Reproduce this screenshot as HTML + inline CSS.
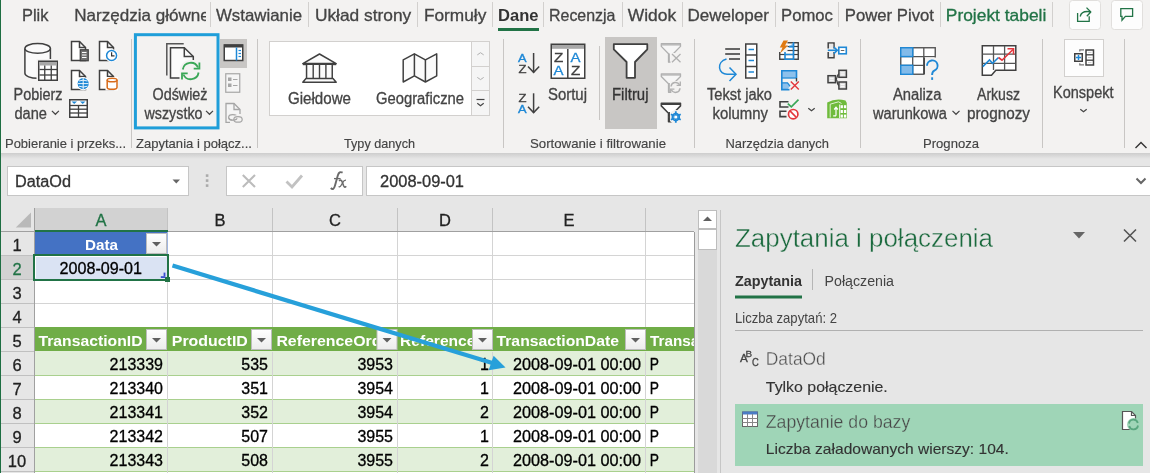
<!DOCTYPE html>
<html><head><meta charset="utf-8"><style>
html,body{margin:0;padding:0;background:#e6e6e6;overflow:hidden}
svg{display:block;font-family:"Liberation Sans", sans-serif;will-change:transform}
</style></head><body>
<svg width="1150" height="473" viewBox="0 0 1150 473">
<rect x="0" y="0" width="1150" height="473" fill="#e6e6e6" />
<rect x="0" y="0" width="1150" height="153" fill="#f3f2f1" />
<defs><linearGradient id="sh" x1="0" y1="0" x2="0" y2="1"><stop offset="0" stop-color="#cdcdcd"/><stop offset="1" stop-color="#e6e6e6"/></linearGradient></defs>
<rect x="0" y="153" width="1150" height="6" fill="url(#sh)" />
<text x="22.0" y="21" font-size="16.5" fill="#444444" textLength="26.5" lengthAdjust="spacingAndGlyphs" stroke="#444444" stroke-width="0.3" >Plik</text>
<text x="216.0" y="21" font-size="16.5" fill="#444444" textLength="86.0" lengthAdjust="spacingAndGlyphs" stroke="#444444" stroke-width="0.3" >Wstawianie</text>
<text x="314.9" y="21" font-size="16.5" fill="#444444" textLength="96.4" lengthAdjust="spacingAndGlyphs" stroke="#444444" stroke-width="0.3" >Układ strony</text>
<text x="423.9" y="21" font-size="16.5" fill="#444444" textLength="62.4" lengthAdjust="spacingAndGlyphs" stroke="#444444" stroke-width="0.3" >Formuły</text>
<text x="549.0" y="21" font-size="16.5" fill="#444444" textLength="66.5" lengthAdjust="spacingAndGlyphs" stroke="#444444" stroke-width="0.3" >Recenzja</text>
<text x="627.7" y="21" font-size="16.5" fill="#444444" textLength="48.5" lengthAdjust="spacingAndGlyphs" stroke="#444444" stroke-width="0.3" >Widok</text>
<text x="687.5" y="21" font-size="16.5" fill="#444444" textLength="81.4" lengthAdjust="spacingAndGlyphs" stroke="#444444" stroke-width="0.3" >Deweloper</text>
<text x="781.1" y="21" font-size="16.5" fill="#444444" textLength="51.8" lengthAdjust="spacingAndGlyphs" stroke="#444444" stroke-width="0.3" >Pomoc</text>
<text x="844.8" y="21" font-size="16.5" fill="#444444" textLength="89.2" lengthAdjust="spacingAndGlyphs" stroke="#444444" stroke-width="0.3" >Power Pivot</text>
<clipPath id="c1"><rect x="60" y="0" width="146" height="30"/></clipPath>
<text x="74.2" y="21" font-size="16.5" fill="#444444" textLength="135.5" lengthAdjust="spacingAndGlyphs" stroke="#444444" stroke-width="0.3" clip-path="url(#c1)">Narzędzia główne</text>
<text x="498" y="21" font-size="16.5" fill="#333" font-weight="bold" textLength="40.5" lengthAdjust="spacingAndGlyphs" >Dane</text>
<rect x="498" y="28" width="41" height="3" fill="#217346" />
<text x="945.8" y="21" font-size="16.5" fill="#217346" textLength="100.5" lengthAdjust="spacingAndGlyphs" stroke="#217346" stroke-width="0.3" >Projekt tabeli</text>
<line x1="210.5" y1="2" x2="210.5" y2="27" stroke="#d2d0ce" stroke-width="1" />
<line x1="308.5" y1="2" x2="308.5" y2="27" stroke="#d2d0ce" stroke-width="1" />
<line x1="417.5" y1="2" x2="417.5" y2="27" stroke="#d2d0ce" stroke-width="1" />
<line x1="492.5" y1="2" x2="492.5" y2="27" stroke="#d2d0ce" stroke-width="1" />
<line x1="543.5" y1="2" x2="543.5" y2="27" stroke="#d2d0ce" stroke-width="1" />
<line x1="622.5" y1="2" x2="622.5" y2="27" stroke="#d2d0ce" stroke-width="1" />
<line x1="682.5" y1="2" x2="682.5" y2="27" stroke="#d2d0ce" stroke-width="1" />
<line x1="775.5" y1="2" x2="775.5" y2="27" stroke="#d2d0ce" stroke-width="1" />
<line x1="838.5" y1="2" x2="838.5" y2="27" stroke="#d2d0ce" stroke-width="1" />
<line x1="940.5" y1="2" x2="940.5" y2="27" stroke="#d2d0ce" stroke-width="1" />
<line x1="1052.5" y1="2" x2="1052.5" y2="27" stroke="#d2d0ce" stroke-width="1" />
<rect x="1069.5" y="0.5" width="31" height="29" fill="#fdfdfd" stroke="#e1dfdd" stroke-width="1" rx="3"/>
<rect x="1111.5" y="0.5" width="31" height="29" fill="#fdfdfd" stroke="#e1dfdd" stroke-width="1" rx="3"/>
<line x1="131.5" y1="39" x2="131.5" y2="148" stroke="#c8c6c4" stroke-width="1" />
<line x1="257.5" y1="39" x2="257.5" y2="148" stroke="#c8c6c4" stroke-width="1" />
<line x1="503.5" y1="39" x2="503.5" y2="148" stroke="#c8c6c4" stroke-width="1" />
<line x1="694.5" y1="39" x2="694.5" y2="148" stroke="#c8c6c4" stroke-width="1" />
<line x1="860.5" y1="39" x2="860.5" y2="148" stroke="#c8c6c4" stroke-width="1" />
<line x1="1042.5" y1="39" x2="1042.5" y2="148" stroke="#c8c6c4" stroke-width="1" />
<line x1="1124.5" y1="39" x2="1124.5" y2="148" stroke="#c8c6c4" stroke-width="1" />
<text x="5" y="147.5" font-size="13" fill="#444444" textLength="121" lengthAdjust="spacingAndGlyphs" stroke="#444" stroke-width="0.15">Pobieranie i przeks...</text>
<text x="136" y="147.5" font-size="13" fill="#444444" textLength="116" lengthAdjust="spacingAndGlyphs" stroke="#444" stroke-width="0.15">Zapytania i połącz...</text>
<text x="344" y="147.5" font-size="13" fill="#444444" textLength="71" lengthAdjust="spacingAndGlyphs" stroke="#444" stroke-width="0.15">Typy danych</text>
<text x="530" y="147.5" font-size="13" fill="#444444" textLength="136" lengthAdjust="spacingAndGlyphs" stroke="#444" stroke-width="0.15">Sortowanie i filtrowanie</text>
<text x="725.5" y="147.5" font-size="13" fill="#444444" textLength="103.5" lengthAdjust="spacingAndGlyphs" stroke="#444" stroke-width="0.15">Narzędzia danych</text>
<text x="923" y="147.5" font-size="13" fill="#444444" textLength="56" lengthAdjust="spacingAndGlyphs" stroke="#444" stroke-width="0.15">Prognoza</text>
<text x="13.5" y="99.5" font-size="15.6" fill="#444444" textLength="49" lengthAdjust="spacingAndGlyphs" stroke="#444444" stroke-width="0.3" >Pobierz</text>
<text x="14.5" y="118.5" font-size="15.6" fill="#444444" textLength="32.5" lengthAdjust="spacingAndGlyphs" stroke="#444444" stroke-width="0.3" >dane</text>
<text x="152.5" y="99.5" font-size="15.6" fill="#444444" textLength="55" lengthAdjust="spacingAndGlyphs" stroke="#444444" stroke-width="0.3" >Odśwież</text>
<text x="144.5" y="118.5" font-size="15.6" fill="#444444" textLength="58" lengthAdjust="spacingAndGlyphs" stroke="#444444" stroke-width="0.3" >wszystko</text>
<text x="548" y="99.5" font-size="15.6" fill="#444444" textLength="39" lengthAdjust="spacingAndGlyphs" stroke="#444444" stroke-width="0.3" >Sortuj</text>
<text x="707" y="99.5" font-size="15.6" fill="#444444" textLength="65" lengthAdjust="spacingAndGlyphs" stroke="#444444" stroke-width="0.3" >Tekst jako</text>
<text x="712.5" y="118.5" font-size="15.6" fill="#444444" textLength="55.5" lengthAdjust="spacingAndGlyphs" stroke="#444444" stroke-width="0.3" >kolumny</text>
<text x="893" y="99.5" font-size="15.6" fill="#444444" textLength="48.5" lengthAdjust="spacingAndGlyphs" stroke="#444444" stroke-width="0.3" >Analiza</text>
<text x="873" y="118.5" font-size="15.6" fill="#444444" textLength="74" lengthAdjust="spacingAndGlyphs" stroke="#444444" stroke-width="0.3" >warunkowa</text>
<text x="977" y="99.5" font-size="15.6" fill="#444444" textLength="43" lengthAdjust="spacingAndGlyphs" stroke="#444444" stroke-width="0.3" >Arkusz</text>
<text x="967" y="118.5" font-size="15.6" fill="#444444" textLength="63" lengthAdjust="spacingAndGlyphs" stroke="#444444" stroke-width="0.3" >prognozy</text>
<text x="1053" y="97.5" font-size="15.6" fill="#444444" textLength="60.5" lengthAdjust="spacingAndGlyphs" stroke="#444444" stroke-width="0.3" >Konspekt</text>
<rect x="7.5" y="166.5" width="181" height="29" fill="#ffffff" stroke="#c6c6c6" stroke-width="1" />
<text x="15" y="187" font-size="16" fill="#333" textLength="56" lengthAdjust="spacingAndGlyphs" stroke="#333" stroke-width="0.3" >DataOd</text>
<rect x="226.5" y="166.5" width="136" height="29" fill="#ffffff" stroke="#c6c6c6" stroke-width="1" />
<rect x="366.5" y="166.5" width="790" height="29" fill="#ffffff" stroke="#c6c6c6" stroke-width="1" />
<text x="380" y="187" font-size="16" fill="#333" textLength="84" lengthAdjust="spacingAndGlyphs" stroke="#333" stroke-width="0.3" >2008-09-01</text>
<rect x="35" y="232" width="659" height="241" fill="#ffffff" />
<rect x="0" y="208" width="694" height="23" fill="#e6e6e6" />
<rect x="35" y="208" width="133" height="23" fill="#d2d2d2" />
<path d="M 31 227.6 L 31 212.4 L 15.8 227.6 Z" fill="#b9b9b9" />
<text x="101.0" y="226" font-size="16.5" fill="#217346" text-anchor="middle" stroke="#217346" stroke-width="0.3" >A</text>
<text x="220.0" y="226" font-size="16.5" fill="#222" text-anchor="middle" stroke="#222" stroke-width="0.3" >B</text>
<text x="335.0" y="226" font-size="16.5" fill="#222" text-anchor="middle" stroke="#222" stroke-width="0.3" >C</text>
<text x="445.0" y="226" font-size="16.5" fill="#222" text-anchor="middle" stroke="#222" stroke-width="0.3" >D</text>
<text x="569.0" y="226" font-size="16.5" fill="#222" text-anchor="middle" stroke="#222" stroke-width="0.3" >E</text>
<line x1="167.5" y1="208" x2="167.5" y2="231" stroke="#c3c3c3" stroke-width="1" />
<line x1="272.5" y1="208" x2="272.5" y2="231" stroke="#c3c3c3" stroke-width="1" />
<line x1="397.5" y1="208" x2="397.5" y2="231" stroke="#c3c3c3" stroke-width="1" />
<line x1="492.5" y1="208" x2="492.5" y2="231" stroke="#c3c3c3" stroke-width="1" />
<line x1="645.5" y1="208" x2="645.5" y2="231" stroke="#c3c3c3" stroke-width="1" />
<line x1="0" y1="231.5" x2="694" y2="231.5" stroke="#a0a0a0" stroke-width="1" />
<rect x="35" y="230" width="133" height="2" fill="#217346" />
<rect x="0" y="232" width="34" height="241" fill="#e6e6e6" />
<rect x="0" y="256" width="34" height="23" fill="#d2d2d2" />
<text x="17" y="250.5" font-size="16.5" fill="#222" text-anchor="middle" stroke="#222" stroke-width="0.3" >1</text>
<text x="17" y="274.5" font-size="16.5" fill="#217346" text-anchor="middle" stroke="#217346" stroke-width="0.3" >2</text>
<text x="17" y="298.5" font-size="16.5" fill="#222" text-anchor="middle" stroke="#222" stroke-width="0.3" >3</text>
<text x="17" y="322.5" font-size="16.5" fill="#222" text-anchor="middle" stroke="#222" stroke-width="0.3" >4</text>
<text x="17" y="346.5" font-size="16.5" fill="#222" text-anchor="middle" stroke="#222" stroke-width="0.3" >5</text>
<text x="17" y="370.5" font-size="16.5" fill="#222" text-anchor="middle" stroke="#222" stroke-width="0.3" >6</text>
<text x="17" y="394.5" font-size="16.5" fill="#222" text-anchor="middle" stroke="#222" stroke-width="0.3" >7</text>
<text x="17" y="418.5" font-size="16.5" fill="#222" text-anchor="middle" stroke="#222" stroke-width="0.3" >8</text>
<text x="17" y="442.5" font-size="16.5" fill="#222" text-anchor="middle" stroke="#222" stroke-width="0.3" >9</text>
<text x="17" y="466.5" font-size="16.5" fill="#222" text-anchor="middle" stroke="#222" stroke-width="0.3" >10</text>
<line x1="0" y1="255.5" x2="34" y2="255.5" stroke="#c0c0c0" stroke-width="1" />
<line x1="0" y1="279.5" x2="34" y2="279.5" stroke="#c0c0c0" stroke-width="1" />
<line x1="0" y1="303.5" x2="34" y2="303.5" stroke="#c0c0c0" stroke-width="1" />
<line x1="0" y1="327.5" x2="34" y2="327.5" stroke="#c0c0c0" stroke-width="1" />
<line x1="0" y1="351.5" x2="34" y2="351.5" stroke="#c0c0c0" stroke-width="1" />
<line x1="0" y1="375.5" x2="34" y2="375.5" stroke="#c0c0c0" stroke-width="1" />
<line x1="0" y1="399.5" x2="34" y2="399.5" stroke="#c0c0c0" stroke-width="1" />
<line x1="0" y1="423.5" x2="34" y2="423.5" stroke="#c0c0c0" stroke-width="1" />
<line x1="0" y1="447.5" x2="34" y2="447.5" stroke="#c0c0c0" stroke-width="1" />
<line x1="0" y1="471.5" x2="34" y2="471.5" stroke="#c0c0c0" stroke-width="1" />
<line x1="34.5" y1="208" x2="34.5" y2="473" stroke="#a0a0a0" stroke-width="1" />
<line x1="35" y1="255.5" x2="694" y2="255.5" stroke="#d4d4d4" stroke-width="1" />
<line x1="35" y1="279.5" x2="694" y2="279.5" stroke="#d4d4d4" stroke-width="1" />
<line x1="35" y1="303.5" x2="694" y2="303.5" stroke="#d4d4d4" stroke-width="1" />
<line x1="35" y1="327.5" x2="694" y2="327.5" stroke="#d4d4d4" stroke-width="1" />
<line x1="167.5" y1="232" x2="167.5" y2="327" stroke="#d4d4d4" stroke-width="1" />
<line x1="272.5" y1="232" x2="272.5" y2="327" stroke="#d4d4d4" stroke-width="1" />
<line x1="397.5" y1="232" x2="397.5" y2="327" stroke="#d4d4d4" stroke-width="1" />
<line x1="492.5" y1="232" x2="492.5" y2="327" stroke="#d4d4d4" stroke-width="1" />
<line x1="645.5" y1="232" x2="645.5" y2="327" stroke="#d4d4d4" stroke-width="1" />
<rect x="35" y="351" width="659" height="24" fill="#e2efda" />
<rect x="35" y="375" width="659" height="24" fill="#ffffff" />
<rect x="35" y="399" width="659" height="24" fill="#e2efda" />
<rect x="35" y="423" width="659" height="24" fill="#ffffff" />
<rect x="35" y="447" width="659" height="24" fill="#e2efda" />
<line x1="35" y1="375.5" x2="694" y2="375.5" stroke="#a9d08e" stroke-width="1" />
<line x1="35" y1="399.5" x2="694" y2="399.5" stroke="#a9d08e" stroke-width="1" />
<line x1="35" y1="423.5" x2="694" y2="423.5" stroke="#a9d08e" stroke-width="1" />
<line x1="35" y1="447.5" x2="694" y2="447.5" stroke="#a9d08e" stroke-width="1" />
<line x1="35" y1="471.5" x2="694" y2="471.5" stroke="#a9d08e" stroke-width="1" />
<line x1="167.5" y1="352" x2="167.5" y2="473" stroke="#d4d4d4" stroke-width="1" />
<line x1="272.5" y1="352" x2="272.5" y2="473" stroke="#d4d4d4" stroke-width="1" />
<line x1="397.5" y1="352" x2="397.5" y2="473" stroke="#d4d4d4" stroke-width="1" />
<line x1="492.5" y1="352" x2="492.5" y2="473" stroke="#d4d4d4" stroke-width="1" />
<line x1="645.5" y1="352" x2="645.5" y2="473" stroke="#d4d4d4" stroke-width="1" />
<rect x="35" y="327" width="659" height="24" fill="#70ad47" />
<rect x="35" y="232" width="132" height="23" fill="#4472c4" />
<line x1="167.5" y1="232" x2="167.5" y2="255" stroke="#9fb5e0" stroke-width="1" />
<text x="101.5" y="249.7" font-size="15.5" fill="#ffffff" font-weight="bold" text-anchor="middle" textLength="33" lengthAdjust="spacingAndGlyphs" >Data</text>
<defs><linearGradient id="fg" x1="0" y1="0" x2="0" y2="1"><stop offset="0" stop-color="#ffffff"/><stop offset="1" stop-color="#ececec"/></linearGradient></defs>
<rect x="146.5" y="233.5" width="20" height="20" fill="url(#fg)" stroke="#bcbcbc"/>
<path d="M 152 242 L 161 242 L 156.5 246.5 Z" fill="#606060"/>
<clipPath id="th0"><rect x="34" y="327" width="112" height="24"/></clipPath>
<text x="38.5" y="346" font-size="15.5" fill="#ffffff" font-weight="bold" textLength="104" lengthAdjust="spacingAndGlyphs" clip-path="url(#th0)">TransactionID</text>
<rect x="146.5" y="329.5" width="20" height="20" fill="url(#fg)" stroke="#bcbcbc"/>
<path d="M 152 338 L 161 338 L 156.5 342.5 Z" fill="#606060"/>
<clipPath id="th1"><rect x="167" y="327" width="84" height="24"/></clipPath>
<text x="171.8" y="346" font-size="15.5" fill="#ffffff" font-weight="bold" textLength="76" lengthAdjust="spacingAndGlyphs" clip-path="url(#th1)">ProductID</text>
<rect x="251.5" y="329.5" width="20" height="20" fill="url(#fg)" stroke="#bcbcbc"/>
<path d="M 257 338 L 266 338 L 261.5 342.5 Z" fill="#606060"/>
<clipPath id="th2"><rect x="272" y="327" width="104.5" height="24"/></clipPath>
<text x="276.4" y="346" font-size="15.5" fill="#ffffff" font-weight="bold" textLength="120" lengthAdjust="spacingAndGlyphs" clip-path="url(#th2)">ReferenceOrder</text>
<rect x="377.0" y="329.5" width="20" height="20" fill="url(#fg)" stroke="#bcbcbc"/>
<path d="M 382.5 338 L 391.5 338 L 387.0 342.5 Z" fill="#606060"/>
<clipPath id="th3"><rect x="397" y="327" width="75" height="24"/></clipPath>
<text x="400" y="346" font-size="15.5" fill="#ffffff" font-weight="bold" textLength="150" lengthAdjust="spacingAndGlyphs" clip-path="url(#th3)">ReferenceOrderLine</text>
<rect x="472.5" y="329.5" width="20" height="20" fill="url(#fg)" stroke="#bcbcbc"/>
<path d="M 478 338 L 487 338 L 482.5 342.5 Z" fill="#606060"/>
<clipPath id="th4"><rect x="492" y="327" width="133" height="24"/></clipPath>
<text x="496.5" y="346" font-size="15.5" fill="#ffffff" font-weight="bold" textLength="122.5" lengthAdjust="spacingAndGlyphs" clip-path="url(#th4)">TransactionDate</text>
<rect x="625.5" y="329.5" width="20" height="20" fill="url(#fg)" stroke="#bcbcbc"/>
<path d="M 631 338 L 640 338 L 635.5 342.5 Z" fill="#606060"/>
<clipPath id="th5"><rect x="645" y="327" width="49" height="24"/></clipPath>
<text x="650" y="346" font-size="15.5" fill="#ffffff" font-weight="bold" textLength="120" lengthAdjust="spacingAndGlyphs" clip-path="url(#th5)">TransactionType</text>
<text x="163" y="370.4" font-size="16" fill="#000" text-anchor="end" stroke="#000" stroke-width="0.3" >213339</text>
<text x="268" y="370.4" font-size="16" fill="#000" text-anchor="end" stroke="#000" stroke-width="0.3" >535</text>
<text x="393" y="370.4" font-size="16" fill="#000" text-anchor="end" stroke="#000" stroke-width="0.3" >3953</text>
<text x="489" y="370.4" font-size="16" fill="#000" text-anchor="end" stroke="#000" stroke-width="0.3" >1</text>
<text x="513" y="370.4" font-size="16" fill="#000" textLength="128" lengthAdjust="spacingAndGlyphs" stroke="#000" stroke-width="0.3" >2008-09-01 00:00</text>
<text x="649.8" y="370.4" font-size="16" fill="#000" textLength="9.2" lengthAdjust="spacingAndGlyphs" stroke="#000" stroke-width="0.3" >P</text>
<text x="163" y="394.4" font-size="16" fill="#000" text-anchor="end" stroke="#000" stroke-width="0.3" >213340</text>
<text x="268" y="394.4" font-size="16" fill="#000" text-anchor="end" stroke="#000" stroke-width="0.3" >351</text>
<text x="393" y="394.4" font-size="16" fill="#000" text-anchor="end" stroke="#000" stroke-width="0.3" >3954</text>
<text x="489" y="394.4" font-size="16" fill="#000" text-anchor="end" stroke="#000" stroke-width="0.3" >1</text>
<text x="513" y="394.4" font-size="16" fill="#000" textLength="128" lengthAdjust="spacingAndGlyphs" stroke="#000" stroke-width="0.3" >2008-09-01 00:00</text>
<text x="649.8" y="394.4" font-size="16" fill="#000" textLength="9.2" lengthAdjust="spacingAndGlyphs" stroke="#000" stroke-width="0.3" >P</text>
<text x="163" y="418.4" font-size="16" fill="#000" text-anchor="end" stroke="#000" stroke-width="0.3" >213341</text>
<text x="268" y="418.4" font-size="16" fill="#000" text-anchor="end" stroke="#000" stroke-width="0.3" >352</text>
<text x="393" y="418.4" font-size="16" fill="#000" text-anchor="end" stroke="#000" stroke-width="0.3" >3954</text>
<text x="489" y="418.4" font-size="16" fill="#000" text-anchor="end" stroke="#000" stroke-width="0.3" >2</text>
<text x="513" y="418.4" font-size="16" fill="#000" textLength="128" lengthAdjust="spacingAndGlyphs" stroke="#000" stroke-width="0.3" >2008-09-01 00:00</text>
<text x="649.8" y="418.4" font-size="16" fill="#000" textLength="9.2" lengthAdjust="spacingAndGlyphs" stroke="#000" stroke-width="0.3" >P</text>
<text x="163" y="442.4" font-size="16" fill="#000" text-anchor="end" stroke="#000" stroke-width="0.3" >213342</text>
<text x="268" y="442.4" font-size="16" fill="#000" text-anchor="end" stroke="#000" stroke-width="0.3" >507</text>
<text x="393" y="442.4" font-size="16" fill="#000" text-anchor="end" stroke="#000" stroke-width="0.3" >3955</text>
<text x="489" y="442.4" font-size="16" fill="#000" text-anchor="end" stroke="#000" stroke-width="0.3" >1</text>
<text x="513" y="442.4" font-size="16" fill="#000" textLength="128" lengthAdjust="spacingAndGlyphs" stroke="#000" stroke-width="0.3" >2008-09-01 00:00</text>
<text x="649.8" y="442.4" font-size="16" fill="#000" textLength="9.2" lengthAdjust="spacingAndGlyphs" stroke="#000" stroke-width="0.3" >P</text>
<text x="163" y="466.4" font-size="16" fill="#000" text-anchor="end" stroke="#000" stroke-width="0.3" >213343</text>
<text x="268" y="466.4" font-size="16" fill="#000" text-anchor="end" stroke="#000" stroke-width="0.3" >508</text>
<text x="393" y="466.4" font-size="16" fill="#000" text-anchor="end" stroke="#000" stroke-width="0.3" >3955</text>
<text x="489" y="466.4" font-size="16" fill="#000" text-anchor="end" stroke="#000" stroke-width="0.3" >2</text>
<text x="513" y="466.4" font-size="16" fill="#000" textLength="128" lengthAdjust="spacingAndGlyphs" stroke="#000" stroke-width="0.3" >2008-09-01 00:00</text>
<text x="649.8" y="466.4" font-size="16" fill="#000" textLength="9.2" lengthAdjust="spacingAndGlyphs" stroke="#000" stroke-width="0.3" >P</text>
<rect x="35" y="256" width="132" height="23" fill="#dae3f3" />
<path d="M 35.5 278 V 256.5 H 166" fill="none" stroke="#ffffff" stroke-width="1" />
<rect x="34" y="255" width="134" height="25" fill="none" stroke="#217346" stroke-width="2" />
<rect x="165" y="277" width="5" height="5" fill="#217346" />
<text x="59.5" y="274" font-size="16" fill="#000" textLength="82.5" lengthAdjust="spacingAndGlyphs" stroke="#000" stroke-width="0.3" >2008-09-01</text>
<line x1="694.5" y1="232" x2="694.5" y2="473" stroke="#9b9b9b" stroke-width="1" />
<rect x="698" y="229" width="19" height="244" fill="#d9d9d9" />
<rect x="698.5" y="210.5" width="18" height="18" fill="#ffffff" stroke="#bdbdbd" stroke-width="1" />
<path d="M 703 221 L 712 221 L 707.5 216.5 Z" fill="#606060" />
<rect x="698.5" y="229.5" width="18" height="20" fill="#ffffff" stroke="#bdbdbd" stroke-width="1" />
<line x1="720.5" y1="210" x2="720.5" y2="473" stroke="#c6c6c6" stroke-width="1" />
<line x1="172.5" y1="265.6" x2="494" y2="363.6" stroke="#27a0da" stroke-width="4.2"/>
<path d="M 505.5 367.4 L 493.6 355.8 L 488.6 370.3 Z" fill="#27a0da"/>
<text x="735" y="246.5" font-size="25.5" fill="#1b6a3e" textLength="258" lengthAdjust="spacingAndGlyphs" stroke="#e6e6e6" stroke-width="0.4">Zapytania i połączenia</text>
<path d="M 1073 232 L 1085 232 L 1079 238.5 Z" fill="#666" />
<path d="M 1124 229.5 L 1136 241.5 M 1136 229.5 L 1124 241.5" fill="none" stroke="#555" stroke-width="1.6" />
<text x="735" y="286.2" font-size="15.5" fill="#333" font-weight="bold" textLength="67" lengthAdjust="spacingAndGlyphs" >Zapytania</text>
<line x1="812.5" y1="269" x2="812.5" y2="290" stroke="#b5b5b5" stroke-width="1" />
<text x="824.5" y="286.2" font-size="15.5" fill="#444" textLength="69.5" lengthAdjust="spacingAndGlyphs" stroke="none">Połączenia</text>
<rect x="735" y="295.5" width="67" height="3" fill="#217346" />
<text x="735" y="323.3" font-size="14.5" fill="#444" textLength="102" lengthAdjust="spacingAndGlyphs" stroke="none">Liczba zapytań: 2</text>
<line x1="735" y1="330.5" x2="1143" y2="330.5" stroke="#b0b0b0" stroke-width="1" />
<text x="765.8" y="365" font-size="17.5" fill="#505050" textLength="60" lengthAdjust="spacingAndGlyphs" stroke="#e6e6e6" stroke-width="0.3">DataOd</text>
<text x="765.8" y="392" font-size="15" fill="#333" textLength="122" lengthAdjust="spacingAndGlyphs" stroke="#333" stroke-width="0.12">Tylko połączenie.</text>
<rect x="735" y="404" width="408" height="62" fill="#9fd5b7" />
<text x="765.8" y="428" font-size="17.5" fill="#484848" textLength="144.5" lengthAdjust="spacingAndGlyphs" stroke="#9fd5b7" stroke-width="0.3">Zapytanie do bazy</text>
<text x="765.8" y="454" font-size="15" fill="#333" textLength="243" lengthAdjust="spacingAndGlyphs" stroke="#333" stroke-width="0.12">Liczba załadowanych wierszy: 104.</text>
<path d="M 24.9 48.4 V 73.3 A 12.75 5 0 0 0 50.4 73.3 V 48.4" fill="#fafafa" stroke="#404040" stroke-width="1.5" />
<ellipse cx="37.65" cy="48.4" rx="12.75" ry="4.9" fill="#fafafa" stroke="#404040" stroke-width="1.5"/>
<rect x="36.5" y="59" width="23" height="23.5" fill="#f3f2f1" />
<rect x="38.75" y="61.25" width="18.5" height="19" fill="#ffffff" stroke="#404040" stroke-width="1.5" />
<rect x="39.5" y="62" width="17" height="3.5" fill="#a8a8a8" />
<line x1="44.75" y1="65.5" x2="44.75" y2="80.5" stroke="#404040" stroke-width="1.3" />
<line x1="51.25" y1="65.5" x2="51.25" y2="80.5" stroke="#404040" stroke-width="1.3" />
<line x1="39.5" y1="69.5" x2="57" y2="69.5" stroke="#404040" stroke-width="1.3" />
<line x1="39.5" y1="75" x2="57" y2="75" stroke="#404040" stroke-width="1.3" />
<path d="M 51.9 110.89999999999999 L 55.4 114.3 L 58.9 110.89999999999999" fill="none" stroke="#444" stroke-width="1.2" />
<path d="M 206.0 110.89999999999999 L 209.5 114.3 L 213.0 110.89999999999999" fill="none" stroke="#444" stroke-width="1.2" />
<path d="M 952.5 110.89999999999999 L 956 114.3 L 959.5 110.89999999999999" fill="none" stroke="#444" stroke-width="1.2" />
<path d="M 808.3 108.2 L 811.5 110.8 L 814.7 108.2" fill="none" stroke="#444" stroke-width="1.2" />
<path d="M 1080.3 109.2 L 1083.5 111.8 L 1086.7 109.2" fill="none" stroke="#444" stroke-width="1.2" />
<path d="M 71.5 60.5 V 41.5 H 79.5 L 85.5 47.5 V 60.5 Z" fill="#ffffff" stroke="#404040" stroke-width="1.5" stroke-linejoin="miter"/>
<path d="M 79.5 41.5 V 47.5 H 85.5" fill="none" stroke="#404040" stroke-width="1.5" />
<rect x="80.25" y="49.75" width="8" height="11" fill="#707070" stroke="#404040" stroke-width="1.2" />
<line x1="82" y1="52.5" x2="86.5" y2="52.5" stroke="#ffffff" stroke-width="1" />
<line x1="82" y1="55" x2="86.5" y2="55" stroke="#ffffff" stroke-width="1" />
<line x1="82" y1="57.5" x2="86.5" y2="57.5" stroke="#ffffff" stroke-width="1" />
<path d="M 99.5 60.5 V 41.5 H 107.5 L 113.5 47.5 V 60.5 Z" fill="#ffffff" stroke="#404040" stroke-width="1.5" stroke-linejoin="miter"/>
<path d="M 107.5 41.5 V 47.5 H 113.5" fill="none" stroke="#404040" stroke-width="1.5" />
<circle cx="111.6" cy="55.5" r="5.6" fill="#ffffff" stroke="#ffffff" stroke-width="2"/>
<circle cx="111.6" cy="55.5" r="5" fill="#ffffff" stroke="#1e88d6" stroke-width="1.5"/>
<path d="M 111.6 52.3 V 55.8 H 114.5" fill="none" stroke="#333" stroke-width="1.2" />
<path d="M 71.5 89.5 V 70.5 H 79.5 L 85.5 76.5 V 89.5 Z" fill="#ffffff" stroke="#404040" stroke-width="1.5" stroke-linejoin="miter"/>
<path d="M 79.5 70.5 V 76.5 H 85.5" fill="none" stroke="#404040" stroke-width="1.5" />
<circle cx="83.2" cy="83.6" r="6.6" fill="#ffffff"/>
<circle cx="83.2" cy="83.6" r="5.6" fill="#1e88d6"/>
<path d="M 77.8 83.6 H 88.6 M 83.2 78 V 89.2 M 79 81 Q 83.2 79.3 87.4 81 M 79 86.2 Q 83.2 87.9 87.4 86.2" fill="none" stroke="#ffffff" stroke-width="0.9" />
<path d="M 99.5 89.5 V 70.5 H 107.5 L 113.5 76.5 V 89.5 Z" fill="#ffffff" stroke="#404040" stroke-width="1.5" stroke-linejoin="miter"/>
<path d="M 107.5 70.5 V 76.5 H 113.5" fill="none" stroke="#404040" stroke-width="1.5" />
<rect x="105.5" y="77" width="12.5" height="13.5" fill="#ffffff" />
<path d="M 107.2 80 V 87.5 A 4.9 1.8 0 0 0 117 87.5 V 80" fill="#ffffff" stroke="#d86b1a" stroke-width="1.5" />
<ellipse cx="112.1" cy="80" rx="4.9" ry="1.8" fill="#ffffff" stroke="#d86b1a" stroke-width="1.5"/>
<rect x="69.75" y="99.75" width="17.5" height="17.5" fill="#ffffff" stroke="#404040" stroke-width="1.5" />
<line x1="70" y1="105.5" x2="87" y2="105.5" stroke="#404040" stroke-width="1.3" />
<line x1="70" y1="109.2" x2="87" y2="109.2" stroke="#404040" stroke-width="1.3" />
<line x1="70" y1="113" x2="87" y2="113" stroke="#404040" stroke-width="1.3" />
<line x1="78.5" y1="105.5" x2="78.5" y2="117" stroke="#404040" stroke-width="1.3" />
<path d="M 71.5 101.5 H 77 L 74.2 104 Z" fill="#1e88d6" />
<path d="M 80 101.5 H 85.5 L 82.7 104 Z" fill="#1e88d6" />
<rect x="135.4" y="34.7" width="82.6" height="93.2" fill="none" stroke="#1f9ed9" stroke-width="3" />
<path d="M 166.8 75.6 V 43.8 H 183.7" fill="none" stroke="#555" stroke-width="1.5" />
<path d="M 179.5 78 H 170.5 V 47.8 H 184.3 L 193.3 56.5 V 60" fill="#fbfbfb" stroke="#404040" stroke-width="1.5" />
<path d="M 184.3 47.8 V 56.5 H 193.3" fill="none" stroke="#404040" stroke-width="1.5" />
<circle cx="190.7" cy="71" r="11" fill="#f3f2f1"/>
<path d="M 182.8 69.5 A 8 8 0 0 1 198 67.5 M 198.6 72.5 A 8 8 0 0 1 183.4 74.5" fill="none" stroke="#3aa757" stroke-width="1.8" />
<path d="M 199.4 62.5 V 68.7 H 193.7" fill="none" stroke="#3aa757" stroke-width="1.8" />
<path d="M 182 79.5 V 73.3 H 187.7" fill="none" stroke="#3aa757" stroke-width="1.8" />
<rect x="220" y="39" width="27" height="29" fill="#c8c6c4" />
<rect x="224.25" y="45" width="18.5" height="15.5" fill="#ffffff" stroke="#404040" stroke-width="1.5" />
<rect x="224" y="44.5" width="19" height="3" fill="#404040" />
<line x1="236.5" y1="47.5" x2="236.5" y2="60.5" stroke="#1e88d6" stroke-width="1.5" />
<line x1="238.5" y1="50.5" x2="241" y2="50.5" stroke="#1e88d6" stroke-width="1.2" />
<line x1="238.5" y1="53.5" x2="241" y2="53.5" stroke="#1e88d6" stroke-width="1.2" />
<line x1="238.5" y1="56.5" x2="241" y2="56.5" stroke="#1e88d6" stroke-width="1.2" />
<rect x="225.75" y="73.75" width="14" height="18.5" fill="#f5f5f5" stroke="#a6a6a6" stroke-width="1.2" />
<rect x="228" y="77.5" width="3.5" height="3.5" fill="#a6a6a6" />
<rect x="228" y="83.5" width="3.5" height="3.5" fill="#a6a6a6" />
<line x1="233" y1="79.5" x2="237.5" y2="79.5" stroke="#a6a6a6" stroke-width="1" />
<line x1="233" y1="85.5" x2="237.5" y2="85.5" stroke="#a6a6a6" stroke-width="1" />
<path d="M 230 122.3 H 226 V 103.5 H 234 L 240 109.5 V 114" fill="#f5f5f5" stroke="#a6a6a6" stroke-width="1.3" />
<path d="M 234 103.5 V 109.5 H 240" fill="none" stroke="#a6a6a6" stroke-width="1.3" />
<ellipse cx="232.8" cy="117.4" rx="4.2" ry="2.8" fill="none" stroke="#f3f2f1" stroke-width="3"/>
<ellipse cx="232.8" cy="117.4" rx="4.2" ry="2.8" fill="none" stroke="#a6a6a6" stroke-width="1.2"/>
<ellipse cx="238" cy="119.4" rx="4.2" ry="2.8" fill="none" stroke="#f3f2f1" stroke-width="3"/>
<ellipse cx="238" cy="119.4" rx="4.2" ry="2.8" fill="none" stroke="#a6a6a6" stroke-width="1.2"/>
<path d="M 229 117.8 A 4.2 2.8 0 0 0 236.5 119" fill="none" stroke="#a6a6a6" stroke-width="1.2" />
<rect x="269.5" y="41.5" width="220" height="74" fill="#ffffff" stroke="#d2d0ce" stroke-width="1" />
<rect x="471.5" y="41.5" width="18" height="25" fill="#f5f5f5" stroke="#d2d0ce" stroke-width="1" />
<rect x="471.5" y="66.5" width="18" height="24" fill="#f5f5f5" stroke="#d2d0ce" stroke-width="1" />
<rect x="471.5" y="90.5" width="18" height="25" fill="#f5f5f5" stroke="#d2d0ce" stroke-width="1" />
<path d="M 477.3 54.9 L 480.5 52.699999999999996 L 483.7 54.9" fill="none" stroke="#b0b0b0" stroke-width="1" />
<path d="M 477.3 77.4 L 480.5 79.6 L 483.7 77.4" fill="none" stroke="#b0b0b0" stroke-width="1" />
<path d="M 477.3 103.3 L 480.5 105.7 L 483.7 103.3" fill="none" stroke="#444" stroke-width="1.2" />
<line x1="476.5" y1="99.5" x2="484.5" y2="99.5" stroke="#444" stroke-width="1.2" />
<text x="288" y="103.5" font-size="15.6" fill="#444444" textLength="63" lengthAdjust="spacingAndGlyphs" stroke="#444444" stroke-width="0.3" >Giełdowe</text>
<text x="376" y="103.5" font-size="15.6" fill="#444444" textLength="88" lengthAdjust="spacingAndGlyphs" stroke="#444444" stroke-width="0.3" >Geograficzne</text>
<path d="M 302.8 63.6 L 319.5 54 L 336.2 63.6 Z" fill="#fbfbfb" stroke="#404040" stroke-width="1.5" stroke-linejoin="round"/>
<rect x="302.8" y="63.6" width="33.4" height="1.6" fill="#404040" />
<line x1="306.6" y1="65" x2="306.6" y2="78.5" stroke="#404040" stroke-width="1.4" />
<line x1="313.2" y1="65" x2="313.2" y2="78.5" stroke="#404040" stroke-width="1.4" />
<line x1="319.5" y1="65" x2="319.5" y2="78.5" stroke="#404040" stroke-width="1.4" />
<line x1="325.9" y1="65" x2="325.9" y2="78.5" stroke="#404040" stroke-width="1.4" />
<line x1="332.2" y1="65" x2="332.2" y2="78.5" stroke="#404040" stroke-width="1.4" />
<rect x="306.6" y="65" width="25.6" height="13.5" fill="#fbfbfb" />
<line x1="306.6" y1="65" x2="306.6" y2="78.5" stroke="#404040" stroke-width="1.4" />
<line x1="313.2" y1="65" x2="313.2" y2="78.5" stroke="#404040" stroke-width="1.4" />
<line x1="319.5" y1="65" x2="319.5" y2="78.5" stroke="#404040" stroke-width="1.4" />
<line x1="325.9" y1="65" x2="325.9" y2="78.5" stroke="#404040" stroke-width="1.4" />
<line x1="332.2" y1="65" x2="332.2" y2="78.5" stroke="#404040" stroke-width="1.4" />
<path d="M 306 78.5 H 333 L 336.2 82.3 H 302.8 Z" fill="#fbfbfb" stroke="#404040" stroke-width="1.5" stroke-linejoin="round"/>
<path d="M 403.2 59.8 L 414.4 53.8 L 425.4 59.8 L 436.7 53.8 V 75.8 L 425.4 82 L 414.4 75.8 L 403.2 82 Z" fill="#fbfbfb" stroke="#404040" stroke-width="1.5" stroke-linejoin="round"/>
<line x1="414.4" y1="53.8" x2="414.4" y2="75.8" stroke="#404040" stroke-width="1.5" />
<line x1="425.4" y1="59.8" x2="425.4" y2="82" stroke="#404040" stroke-width="1.5" />
<text x="518" y="61.5" font-size="11.8" fill="#1e88d6" textLength="8.6" lengthAdjust="spacingAndGlyphs" stroke="#1e88d6" stroke-width="0.35">A</text>
<text x="518.5" y="72.5" font-size="11.8" fill="#404040" textLength="8" lengthAdjust="spacingAndGlyphs" stroke="#404040" stroke-width="0.35">Z</text>
<text x="518.5" y="101.6" font-size="11.8" fill="#404040" textLength="8" lengthAdjust="spacingAndGlyphs" stroke="#404040" stroke-width="0.35">Z</text>
<text x="518" y="112.6" font-size="11.8" fill="#1e88d6" textLength="8.6" lengthAdjust="spacingAndGlyphs" stroke="#1e88d6" stroke-width="0.35">A</text>
<line x1="533.6" y1="53" x2="533.6" y2="72.5" stroke="#404040" stroke-width="1.5" />
<path d="M 528 66.5 L 533.6 72.3 L 539.2 66.5" fill="none" stroke="#404040" stroke-width="1.5" />
<line x1="533.6" y1="93.3" x2="533.6" y2="112.8" stroke="#404040" stroke-width="1.5" />
<path d="M 528 106.8 L 533.6 112.6 L 539.2 106.8" fill="none" stroke="#404040" stroke-width="1.5" />
<rect x="551.25" y="44.25" width="33.5" height="34" fill="#ffffff" stroke="#404040" stroke-width="1.5" />
<rect x="552" y="45" width="32" height="3.8" fill="#a8a8a8" />
<line x1="567.8" y1="49" x2="567.8" y2="78" stroke="#404040" stroke-width="1.5" />
<text x="554" y="62" font-size="12.5" fill="#404040" textLength="9.3" lengthAdjust="spacingAndGlyphs" stroke="#404040" stroke-width="0.3" >Z</text>
<text x="553.6" y="74.8" font-size="12.5" fill="#1e88d6" textLength="10" lengthAdjust="spacingAndGlyphs" stroke="#1e88d6" stroke-width="0.3" >A</text>
<text x="570.6" y="62" font-size="12.5" fill="#1e88d6" textLength="10" lengthAdjust="spacingAndGlyphs" stroke="#1e88d6" stroke-width="0.3" >A</text>
<text x="571" y="74.8" font-size="12.5" fill="#404040" textLength="9.3" lengthAdjust="spacingAndGlyphs" stroke="#404040" stroke-width="0.3" >Z</text>
<line x1="599.5" y1="46" x2="599.5" y2="120" stroke="#c8c6c4" stroke-width="1" />
<rect x="605" y="37" width="52" height="92" fill="#c8c6c4" />
<text x="612" y="99.5" font-size="15.6" fill="#333" textLength="36.5" lengthAdjust="spacingAndGlyphs" stroke="#333" stroke-width="0.3" >Filtruj</text>
<path d="M 613.8 44.2 H 647.3 V 49.3 L 635 62 V 77.8 H 626.6 V 62 L 613.8 49.3 Z" fill="#ffffff" stroke="#404040" stroke-width="1.8" stroke-linejoin="round"/>
<path d="M 661.3 43.7 H 680.5 V 46.400000000000006 L 673.3 53.7 V 62.2 H 668.5 V 53.7 L 661.3 46.400000000000006 Z" fill="#f6f6f6" stroke="#b0b0b0" stroke-width="1.3" stroke-linejoin="round"/>
<rect x="662" y="44.2" width="18" height="1.3" fill="#b0b0b0" />
<rect x="670.5" y="53" width="12" height="10.5" fill="#f3f2f1" />
<line x1="669.2" y1="53.5" x2="669.2" y2="62.2" stroke="#b0b0b0" stroke-width="1.3" />
<path d="M 672 54 L 680.5 62.2 M 680.5 54 L 672 62.2" fill="none" stroke="#b0b0b0" stroke-width="1.3" />
<path d="M 661.3 73.8 H 680.5 V 76.5 L 673.3 83.8 V 92.3 H 668.5 V 83.8 L 661.3 76.5 Z" fill="#f6f6f6" stroke="#b0b0b0" stroke-width="1.3" stroke-linejoin="round"/>
<rect x="662" y="74.3" width="18" height="1.3" fill="#b0b0b0" />
<rect x="670.5" y="81" width="12" height="12.5" fill="#f3f2f1" />
<line x1="669.2" y1="83" x2="669.2" y2="92.3" stroke="#b0b0b0" stroke-width="1.3" />
<path d="M 671 86.5 A 4.6 4.6 0 0 1 679.6 84.8 M 680 88.2 A 4.6 4.6 0 0 1 671.4 90" fill="none" stroke="#b0b0b0" stroke-width="1.5" />
<path d="M 680.3 81.5 V 85.3 H 676.6" fill="none" stroke="#b0b0b0" stroke-width="1.3" />
<path d="M 670.7 93 V 89.2 H 674.4" fill="none" stroke="#b0b0b0" stroke-width="1.3" />
<path d="M 661.3 103.2 H 680.5 V 105.9 L 673.3 113.2 V 121.7 H 668.5 V 113.2 L 661.3 105.9 Z" fill="#ffffff" stroke="#404040" stroke-width="1.5" stroke-linejoin="round"/>
<rect x="662" y="103.7" width="18" height="1.3" fill="#404040" />
<circle cx="675.8" cy="117" r="7" fill="#f3f2f1"/>
<line x1="669.2" y1="112" x2="669.2" y2="122" stroke="#404040" stroke-width="1.5" />
<circle cx="675.8" cy="117" r="3.4" fill="none" stroke="#1e88d6" stroke-width="1.8"/>
<path d="M 675.8 111.3 V 122.7 M 670.9 114.2 L 680.7 119.8 M 670.9 119.8 L 680.7 114.2" fill="none" stroke="#1e88d6" stroke-width="1.8" />
<circle cx="675.8" cy="117" r="1.6" fill="#ffffff"/>
<line x1="725.2" y1="49" x2="740" y2="49" stroke="#555" stroke-width="1.8" />
<line x1="725.2" y1="54" x2="740" y2="54" stroke="#555" stroke-width="1.8" />
<line x1="729" y1="59" x2="740" y2="59" stroke="#555" stroke-width="1.8" />
<rect x="745.75" y="44" width="11" height="34" fill="#ffffff" stroke="#404040" stroke-width="1.5" />
<line x1="745.75" y1="55" x2="756.75" y2="55" stroke="#404040" stroke-width="1.5" />
<line x1="745.75" y1="66.5" x2="756.75" y2="66.5" stroke="#404040" stroke-width="1.5" />
<line x1="748.5" y1="49.5" x2="754" y2="49.5" stroke="#1e88d6" stroke-width="1.5" />
<line x1="748.5" y1="60.5" x2="754" y2="60.5" stroke="#1e88d6" stroke-width="1.5" />
<line x1="748.5" y1="72" x2="754" y2="72" stroke="#1e88d6" stroke-width="1.5" />
<path d="M 726.5 59 C 716 62 718 75 728 74.2 L 735.5 74.2" fill="none" stroke="#1e88d6" stroke-width="1.5" />
<path d="M 729.5 67.5 L 736 74.2 L 729.5 81" fill="none" stroke="#1e88d6" stroke-width="1.5" />
<rect x="779.75" y="42.75" width="18.5" height="16.5" fill="#ffffff" stroke="#404040" stroke-width="1.4" />
<line x1="780" y1="46.5" x2="798" y2="46.5" stroke="#404040" stroke-width="1.2" />
<line x1="780" y1="50.5" x2="798" y2="50.5" stroke="#404040" stroke-width="1.2" />
<line x1="780" y1="54.5" x2="798" y2="54.5" stroke="#404040" stroke-width="1.2" />
<line x1="793.5" y1="43" x2="793.5" y2="59" stroke="#404040" stroke-width="1.2" />
<path d="M 788 48 L 793.5 42.5 V 48 Z" fill="#8cc1ec" />
<path d="M 785 50.5 V 59.3 H 793.5 V 42.3 M 789 46.5 H 793.5 M 785 54.5 H 793.5" fill="none" stroke="#1e88d6" stroke-width="1.6" />
<rect x="779" y="40" width="8.5" height="12" fill="#f3f2f1" />
<path d="M 783.5 40.5 H 788 L 785 45.5 H 788 L 780 53.5 L 782.5 47.5 H 779.8 Z" fill="#e07a12" />
<rect x="782" y="70.8" width="14.2" height="7" fill="#8cc1ec" />
<path d="M 782 82.8 H 787.5 L 790 86.2 L 787.5 89.2 H 782 Z" fill="#8cc1ec" />
<path d="M 789.5 89.6 H 781.8 V 70.8 H 796.5 V 78" fill="none" stroke="#1e88d6" stroke-width="1.6" />
<path d="M 782 78 H 796.5" fill="none" stroke="#1e88d6" stroke-width="1.3" />
<path d="M 796.5 78 V 81.5" fill="none" stroke="#404040" stroke-width="1.4" />
<path d="M 782 82.8 H 787.5 L 790 86.2" fill="none" stroke="#1e88d6" stroke-width="1.3" />
<path d="M 790.8 81.5 L 798.8 89.5 M 798.8 81.5 L 790.8 89.5" fill="none" stroke="#e3363c" stroke-width="1.4" />
<path d="M 788.5 101.8 H 780 V 107 H 788.5 M 786.5 111.2 H 780 V 116.6 H 786.5" fill="none" stroke="#404040" stroke-width="1.6" />
<path d="M 787.8 103.6 L 791.3 106.8 L 798.5 99.6" fill="none" stroke="#3aa757" stroke-width="1.7" />
<circle cx="793.2" cy="114.2" r="4.7" fill="#ffffff" stroke="#e3363c" stroke-width="1.7"/>
<line x1="790" y1="110.9" x2="796.4" y2="117.5" stroke="#e3363c" stroke-width="1.7" />
<path d="M 834 48.5 V 43 H 828.2 V 48.5 M 834 52 V 57.7 H 828.2 V 52" fill="none" stroke="#404040" stroke-width="1.5" />
<rect x="829" y="43.8" width="4.2" height="4" fill="#e8e8e8" />
<rect x="829" y="52.8" width="4.2" height="4" fill="#e8e8e8" />
<path d="M 827.8 50.3 H 836.5" fill="none" stroke="#1e88d6" stroke-width="1.6" />
<path d="M 833.8 47 L 837.3 50.3 L 833.8 53.6" fill="none" stroke="#1e88d6" stroke-width="1.6" />
<rect x="838.8" y="47.3" width="7.5" height="6.5" fill="#ffffff" stroke="#1e88d6" stroke-width="1.6" />
<line x1="840.8" y1="50.5" x2="844.3" y2="50.5" stroke="#666" stroke-width="1" />
<rect x="828" y="75.7" width="7.5" height="7" fill="#dcdcdc" stroke="#404040" stroke-width="1.5" />
<line x1="829.8" y1="78.3" x2="833.7" y2="78.3" stroke="#ffffff" stroke-width="0.9" />
<line x1="829.8" y1="80.3" x2="833.7" y2="80.3" stroke="#ffffff" stroke-width="0.9" />
<rect x="838.9" y="70.3" width="7.5" height="7" fill="#dcdcdc" stroke="#404040" stroke-width="1.5" />
<line x1="840.6999999999999" y1="72.89999999999999" x2="844.6" y2="72.89999999999999" stroke="#ffffff" stroke-width="0.9" />
<line x1="840.6999999999999" y1="74.89999999999999" x2="844.6" y2="74.89999999999999" stroke="#ffffff" stroke-width="0.9" />
<rect x="838.9" y="82" width="7.5" height="7" fill="#dcdcdc" stroke="#404040" stroke-width="1.5" />
<line x1="840.6999999999999" y1="84.6" x2="844.6" y2="84.6" stroke="#ffffff" stroke-width="0.9" />
<line x1="840.6999999999999" y1="86.6" x2="844.6" y2="86.6" stroke="#ffffff" stroke-width="0.9" />
<path d="M 835.8 79.2 C 837.5 79.2 837 74 838.9 73.8 M 835.8 79.2 C 837.5 79.2 837 85.5 838.9 85.5" fill="none" stroke="#404040" stroke-width="1.3" />
<path d="M 827.2 102.5 Q 836 97.5 845.5 100.5 L 846.8 103 V 118.2 H 827.2 Z" fill="#6fbb3c" />
<path d="M 830.2 117.5 V 104.2 L 838.5 101.8 L 841.5 103.5" fill="none" stroke="#e3f0d6" stroke-width="1" />
<rect x="839" y="104.5" width="1.2" height="13.5" fill="#e3f0d6" />
<rect x="840.6" y="105.2" width="2.3" height="3" fill="#ffffff" />
<rect x="843.9" y="105.2" width="2.3" height="3" fill="#ffffff" />
<rect x="840.6" y="110" width="2.3" height="3" fill="#ffffff" />
<rect x="843.9" y="110" width="2.3" height="3" fill="#ffffff" />
<rect x="840.6" y="114.6" width="2.3" height="3" fill="#ffffff" />
<rect x="843.9" y="114.6" width="2.3" height="3" fill="#ffffff" />
<path d="M 836 115.8 V 107.5 M 834.2 109.5 L 836 107.3 L 837.8 109.5 M 836 115.8 H 833.2" fill="none" stroke="#ffffff" stroke-width="1.2" />
<rect x="900.75" y="47.75" width="34.5" height="26.5" fill="#ffffff" stroke="#555" stroke-width="1.4" />
<line x1="912.7" y1="48" x2="912.7" y2="74" stroke="#555" stroke-width="1.3" />
<line x1="923.8" y1="48" x2="923.8" y2="74" stroke="#555" stroke-width="1.3" />
<line x1="901" y1="56.6" x2="935" y2="56.6" stroke="#555" stroke-width="1.3" />
<line x1="901" y1="65.3" x2="935" y2="65.3" stroke="#555" stroke-width="1.3" />
<rect x="900.75" y="47.75" width="12" height="8.8" fill="#82bbea" stroke="#1e88d6" stroke-width="1.4" />
<rect x="900.75" y="65.3" width="12" height="9" fill="#82bbea" stroke="#1e88d6" stroke-width="1.4" />
<rect x="924.6" y="57.5" width="14" height="24" fill="#f3f2f1"/>
<path d="M 927 65.8 A 5.3 5.3 0 1 1 934.3 70.6 C 932.6 71.4 932.1 72.5 932.1 75" fill="none" stroke="#1e88d6" stroke-width="1.9" />
<rect x="931.2" y="77.3" width="1.9" height="2.6" fill="#1e88d6" />
<path d="M 924.2 57.4 V 74" fill="none" stroke="#404040" stroke-width="1.5" />
<path d="M 982.3 75.3 V 45.8 H 1015.8 V 70.2 H 995.8 L 991.5 75.3 Z" fill="#ffffff" stroke="#404040" stroke-width="1.5" stroke-linejoin="miter"/>
<line x1="993.5" y1="46" x2="993.5" y2="70" stroke="#555" stroke-width="1.3" />
<line x1="1004.6" y1="46" x2="1004.6" y2="70" stroke="#555" stroke-width="1.3" />
<line x1="982.5" y1="54.2" x2="1015.5" y2="54.2" stroke="#555" stroke-width="1.3" />
<line x1="982.5" y1="63.3" x2="1015.5" y2="63.3" stroke="#555" stroke-width="1.3" />
<path d="M 982.8 66.6 L 989.5 60 L 992.5 63.3 L 998.5 57.5" fill="none" stroke="#1e88d6" stroke-width="1.6" />
<path d="M 998.5 57.5 L 1002 60.2 L 1013 49.5" fill="none" stroke="#e3363c" stroke-width="1.6" />
<path d="M 1007.5 48.7 H 1013.5 V 54.5" fill="none" stroke="#e3363c" stroke-width="1.6" />
<rect x="1064.5" y="39.5" width="39" height="37" fill="#fdfdfd" stroke="#d2d0ce" stroke-width="1" />
<rect x="1074.75" y="53.75" width="7.5" height="7.5" fill="#ffffff" stroke="#404040" stroke-width="1.5" />
<path d="M 1076 57.5 H 1081 M 1078.5 55 V 60" fill="none" stroke="#1e88d6" stroke-width="1.5" />
<path d="M 1079.8 51.5 V 49.8 H 1084 M 1079.8 63.2 V 64.8 H 1084" fill="none" stroke="#777" stroke-width="1.2" />
<rect x="1086" y="50" width="7.5" height="15" fill="#ffffff" stroke="#404040" stroke-width="1.5" />
<line x1="1086" y1="54.8" x2="1093.5" y2="54.8" stroke="#404040" stroke-width="1.3" />
<line x1="1086" y1="60.2" x2="1093.5" y2="60.2" stroke="#404040" stroke-width="1.3" />
<line x1="1088" y1="52.4" x2="1091.5" y2="52.4" stroke="#cfcfcf" stroke-width="1" />
<line x1="1088" y1="57.5" x2="1091.5" y2="57.5" stroke="#cfcfcf" stroke-width="1" />
<line x1="1088" y1="62.6" x2="1091.5" y2="62.6" stroke="#cfcfcf" stroke-width="1" />
<path d="M 1135.5 147.95 L 1141 142.45 L 1146.5 147.95" fill="none" stroke="#333" stroke-width="1.4" />
<path d="M 1077.6 13 V 21.4 H 1089.2 V 16.2" fill="none" stroke="#217346" stroke-width="1.3" />
<path d="M 1080.2 16.5 C 1081 12.5 1084.5 10.8 1090.5 11.8 M 1086.5 7.6 L 1090.8 12 L 1086.8 16.2" fill="none" stroke="#217346" stroke-width="1.3" stroke-linejoin="round"/>
<path d="M 1120.8 8.6 H 1132.6 V 16.4 H 1125.4 L 1122 20.2 V 16.4 H 1120.8 Z" fill="none" stroke="#217346" stroke-width="1.3" />
<path d="M 172.5 179.5 H 180 L 176.25 183.5 Z" fill="#666" />
<rect x="205.8" y="174.3" width="2.6" height="2.6" fill="#aaaaaa" />
<rect x="205.8" y="179.3" width="2.6" height="2.6" fill="#aaaaaa" />
<rect x="205.8" y="184.3" width="2.6" height="2.6" fill="#aaaaaa" />
<path d="M 242.8 175 L 255 187 M 255 175 L 242.8 187" fill="none" stroke="#bcbcbc" stroke-width="2.1" />
<path d="M 286.5 181.5 L 292 187 L 302 175.5" fill="none" stroke="#c2c2c2" stroke-width="2.8" />
<path d="M 330.8 188 Q 333.5 191 335 185.5 L 337.8 175.5 Q 339.2 170.8 342.6 172.6" fill="none" stroke="#6a6a6a" stroke-width="1.9" />
<path d="M 334 178.6 H 340.6" fill="none" stroke="#6a6a6a" stroke-width="1.3" />
<path d="M 339 180.8 Q 341.2 179 342.3 182.2 L 343.6 185.8 Q 344.6 188.2 346.2 186.2" fill="none" stroke="#6a6a6a" stroke-width="1.6" />
<path d="M 346 180.2 Q 344 180 342.5 183 L 341 185.5 Q 339.8 187.5 338.6 186.6" fill="none" stroke="#6a6a6a" stroke-width="1.3" />
<path d="M 1136.5 178.5 L 1141 183 L 1145.5 178.5" fill="none" stroke="#666" stroke-width="2" />
<rect x="163.6" y="272.6" width="1.8" height="3.6" fill="#3b4fd0" />
<rect x="160.8" y="276.2" width="4.6" height="1.8" fill="#3b4fd0" />
<text x="740" y="362" font-size="11" fill="#444" textLength="7.8" lengthAdjust="spacingAndGlyphs" stroke="#444" stroke-width="0.3">A</text>
<text x="745.5" y="357.3" font-size="9.8" fill="#444" textLength="6.6" lengthAdjust="spacingAndGlyphs" stroke="#444" stroke-width="0.3">B</text>
<text x="752" y="365.6" font-size="10.5" fill="#444" textLength="6.8" lengthAdjust="spacingAndGlyphs" stroke="#444" stroke-width="0.3">C</text>
<rect x="742.5" y="412" width="15" height="14.5" fill="#ffffff" stroke="#666" stroke-width="1" />
<rect x="742.5" y="411.5" width="15" height="3" fill="#4a7cc4" />
<line x1="747.5" y1="414" x2="747.5" y2="426.5" stroke="#888" stroke-width="1" />
<line x1="752.5" y1="414" x2="752.5" y2="426.5" stroke="#888" stroke-width="1" />
<line x1="742.5" y1="418.5" x2="757.5" y2="418.5" stroke="#888" stroke-width="1" />
<line x1="742.5" y1="422.5" x2="757.5" y2="422.5" stroke="#888" stroke-width="1" />
<path d="M 1122.5 429.5 V 411.5 H 1131.5 L 1135.5 415.5 V 429.5 Z" fill="#ffffff" stroke="#555" stroke-width="1.2" stroke-linejoin="miter"/>
<path d="M 1131.5 411.5 V 415.5 H 1135.5" fill="none" stroke="#555" stroke-width="1.2" />
<circle cx="1133.5" cy="424.5" r="6.5" fill="#9fd5b7"/>
<path d="M 1129 423.5 A 4.5 4.5 0 0 1 1137.8 423 M 1138 425.5 A 4.5 4.5 0 0 1 1129.2 426" fill="none" stroke="#58a67e" stroke-width="1.8" />
<line x1="0.5" y1="0" x2="0.5" y2="473" stroke="#1e6e42" stroke-width="1" />
</svg></body></html>
